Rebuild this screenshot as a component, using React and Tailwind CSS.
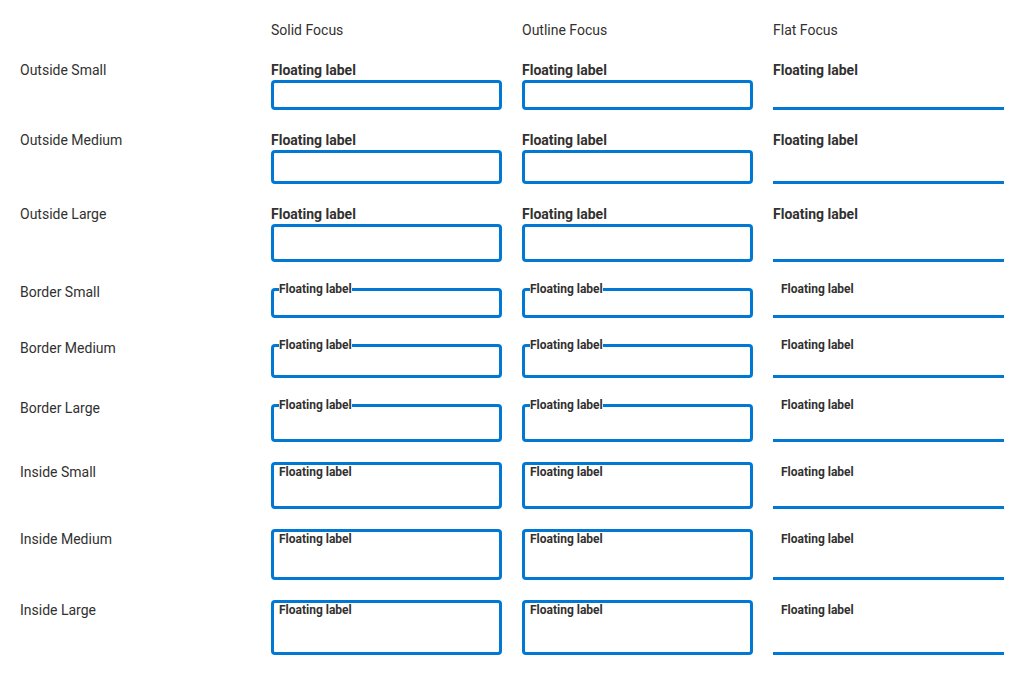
const rows = [
  { name: "Outside Small", kind: "outside", h: "h-[30px]" },
  { name: "Outside Medium", kind: "outside", h: "h-[34px]" },
  { name: "Outside Large", kind: "outside", h: "h-[38px]" },
  { name: "Border Small", kind: "border", h: "h-[29.5px]" },
  { name: "Border Medium", kind: "border", h: "h-[34px]" },
  { name: "Border Large", kind: "border", h: "h-[38px]" },
  { name: "Inside Small", kind: "inside", h: "h-[47px]" },
  { name: "Inside Medium", kind: "inside", h: "h-[51px]" },
  { name: "Inside Large", kind: "inside", h: "h-[55px]" },
];

function Field({ kind, h, flat }) {
  const box = flat
    ? `${h} border-b-[3px] border-[#0078d4]`
    : `${h} border-[3px] border-[#0078d4] rounded-[4px]`;

  if (kind === "outside") {
    return (
      <div>
        <div className="text-sm font-bold leading-5 text-[#323130]">Floating label</div>
        <div className={box} />
      </div>
    );
  }

  if (kind === "border") {
    return (
      <div className="pt-[6px]">
        <div className={`relative ${box}`}>
          <span
            className={`absolute bg-white text-xs font-bold leading-4 text-[#323130] ${
              flat ? "top-[-7px] left-[8px]" : "top-[-10px] left-[5px]"
            }`}
          >
            Floating label
          </span>
        </div>
      </div>
    );
  }

  return (
    <div className={`relative ${box}`}>
      <span
        className={`absolute text-xs font-bold leading-4 text-[#323130] ${
          flat ? "top-[2px] left-[8px]" : "top-[-1px] left-[5px]"
        }`}
      >
        Floating label
      </span>
    </div>
  );
}

export default function App() {
  return (
    <div className="min-h-screen bg-white p-5 font-['Roboto',sans-serif] text-[#323130]">
      <div className="grid grid-cols-4 gap-5 items-start">
        <div />
        <div className="text-sm leading-5">Solid Focus</div>
        <div className="text-sm leading-5">Outline Focus</div>
        <div className="text-sm leading-5">Flat Focus</div>

        {rows.map((r) => [
          <div key={r.name + "-l"} className="text-sm leading-5">{r.name}</div>,
          <Field key={r.name + "-s"} kind={r.kind} h={r.h} />,
          <Field key={r.name + "-o"} kind={r.kind} h={r.h} />,
          <Field key={r.name + "-f"} kind={r.kind} h={r.h} flat />,
        ])}
      </div>
    </div>
  );
}
